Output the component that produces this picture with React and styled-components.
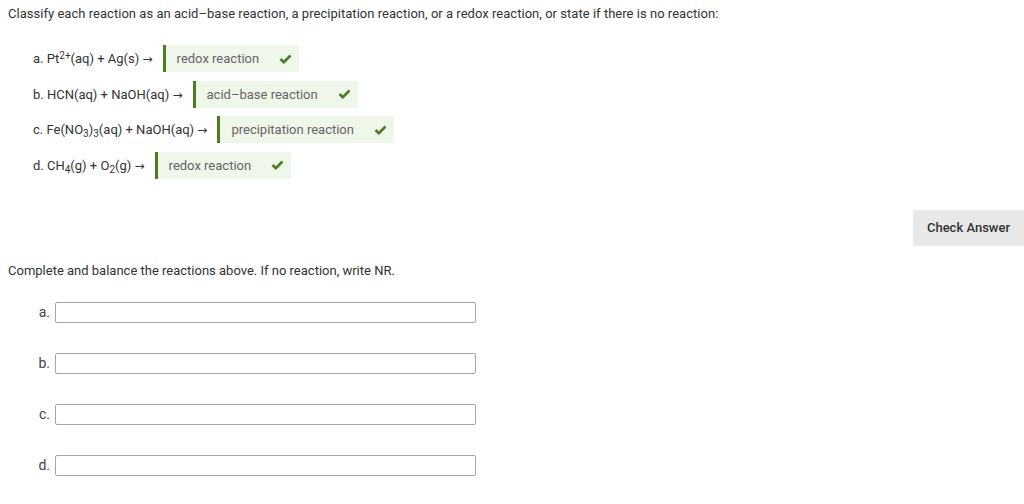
import React from 'react';
import styled, { createGlobalStyle } from 'styled-components';

const GlobalStyle = createGlobalStyle`
    body {
        margin: 0;
        background: #fff;
        font-family: Roboto, "Liberation Sans", sans-serif;
        color: #333;
    }
`;

const Page = styled.div`
    width: 1024px;
    height: 504px;
    box-sizing: border-box;
    padding: 6px 0 0 8px;
    font-size: 13px;
    overflow: hidden;
`;

const Prompt = styled.div`
    line-height: 16px;
    letter-spacing: 0.03px;
`;

const ReactionList = styled.div`
    display: flex;
    flex-direction: column;
    gap: 8.5px;
    margin: 23px 0 0 25px;
`;

const Reaction = styled.div`
    display: flex;
    align-items: center;
    height: 27px;
`;

const Equation = styled.span`
    margin-right: 10px;
    white-space: nowrap;

    sup, sub {
        font-size: 10px;
        line-height: 0;
    }
    sub {
        vertical-align: -3px;
    }
    sup {
        vertical-align: 4px;
    }
`;

const Arrow = styled.span`
    font-family: "DejaVu Sans", sans-serif;
    font-size: 12px;
`;

const Answer = styled.div`
    display: flex;
    align-items: center;
    height: 27px;
    padding: 0 7px 0 11px;
    background: #eff6ea;
    border-left: 3px solid #4b7d1f;
    color: #666;
    gap: 20px;
`;

const ButtonRow = styled.div`
    display: flex;
    justify-content: flex-end;
    margin-top: 31px;
`;

const CheckButton = styled.button`
    width: 111px;
    height: 36px;
    border: none;
    border-radius: 2px 0 0 2px;
    background: #e8e8e8;
    color: #333;
    font-family: Roboto, "Liberation Sans", sans-serif;
    font-size: 13px;
    font-weight: 500;
    padding: 0;
`;

const SubPrompt = styled.div`
    margin-top: 17px;
    line-height: 16px;
`;

const InputList = styled.div`
    display: flex;
    flex-direction: column;
    gap: 30px;
    margin-top: 23px;
`;

const InputRow = styled.label`
    display: flex;
    align-items: center;
    height: 21px;
`;

const InputLabel = styled.span`
    width: 42px;
    text-align: right;
    margin-right: 5px;
    font-size: 14px;
    color: #444;
`;

const TextBox = styled.input`
    width: 421px;
    height: 21px;
    box-sizing: border-box;
    border: 1px solid #a6a6a6;
    border-radius: 2px;
    padding: 0 4px;
    font-size: 13px;
    outline: none;
`;

const Check = () => (
    <svg width="13" height="10" viewBox="0 0 13 10">
        <path d="M1.5 5 L4.8 8.2 L11.5 1.5" fill="none" stroke="#4a7c1f" strokeWidth="2.6" />
    </svg>
);

const reactions = [
    { key: 'a', eq: <>a. Pt<sup>2+</sup>(aq) + Ag(s)</>, answer: 'redox reaction' },
    { key: 'b', eq: <>b. HCN(aq) + NaOH(aq)</>, answer: 'acid–base reaction' },
    { key: 'c', eq: <>c. Fe(NO<sub>3</sub>)<sub>3</sub>(aq) + NaOH(aq)</>, answer: 'precipitation reaction' },
    { key: 'd', eq: <>d. CH<sub>4</sub>(g) + O<sub>2</sub>(g)</>, answer: 'redox reaction' },
];

export default function App() {
    return (
        <Page>
            <GlobalStyle />
            <Prompt>
                Classify each reaction as an acid–base reaction, a precipitation reaction, or a redox reaction, or state if there is no reaction:
            </Prompt>
            <ReactionList>
                {reactions.map(r => (
                    <Reaction key={r.key}>
                        <Equation>{r.eq} <Arrow>→</Arrow></Equation>
                        <Answer>
                            <span>{r.answer}</span>
                            <Check />
                        </Answer>
                    </Reaction>
                ))}
            </ReactionList>
            <ButtonRow>
                <CheckButton>Check Answer</CheckButton>
            </ButtonRow>
            <SubPrompt>Complete and balance the reactions above. If no reaction, write NR.</SubPrompt>
            <InputList>
                {['a', 'b', 'c', 'd'].map(k => (
                    <InputRow key={k}>
                        <InputLabel>{k}.</InputLabel>
                        <TextBox type="text" />
                    </InputRow>
                ))}
            </InputList>
        </Page>
    );
}
